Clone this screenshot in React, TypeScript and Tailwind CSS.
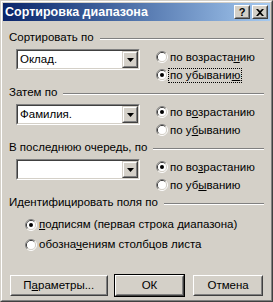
import type { ReactNode } from 'react';

const font = { fontFamily: '"Liberation Sans", Arial, sans-serif' };

function Radio({ checked }: { checked?: boolean }) {
  return (
    <svg width="12" height="12" viewBox="0 0 12 12" className="shrink-0">
      <path d="M2.11 9.89A5.5 5.5 0 0 1 9.89 2.11" fill="none" stroke="#808080" />
      <path d="M9.89 2.11A5.5 5.5 0 0 1 2.11 9.89" fill="none" stroke="#ffffff" />
      <path d="M2.82 9.18A4.5 4.5 0 0 1 9.18 2.82" fill="none" stroke="#404040" />
      <path d="M9.18 2.82A4.5 4.5 0 0 1 2.82 9.18" fill="none" stroke="#d4d0c8" />
      <circle cx="6" cy="6" r="4" fill="#ffffff" />
      {checked && <circle cx="6" cy="6" r="2" fill="#000000" />}
    </svg>
  );
}

function RadioRow({ checked, focus, children }: { checked?: boolean; focus?: boolean; children: ReactNode }) {
  return (
    <div className="flex items-center h-[18px]">
      <Radio checked={checked} />
      <span
        className={
          'px-[1px] leading-[13px] whitespace-nowrap border border-dotted ' +
          (focus ? 'border-black' : 'border-transparent')
        }
      >
        {children}
      </span>
    </div>
  );
}

function Combo({ value }: { value: string }) {
  return (
    <div className="w-[124px] h-[21px] border border-t-[#808080] border-l-[#808080] border-b-white border-r-white">
      <div className="h-full flex border border-t-[#404040] border-l-[#404040] border-b-[#d4d0c8] border-r-[#d4d0c8] bg-white">
        <span className="flex-1 pl-[2px] leading-[17px]">{value}</span>
        <div className="w-[16px] h-full border border-t-[#d4d0c8] border-l-[#d4d0c8] border-b-[#404040] border-r-[#404040]">
          <div className="h-full flex items-center justify-center bg-[#d4d0c8] border border-t-white border-l-white border-b-[#808080] border-r-[#808080]">
            <svg width="7" height="4" viewBox="0 0 7 4">
              <path d="M0 0h7L3.5 4z" fill="#000" />
            </svg>
          </div>
        </div>
      </div>
    </div>
  );
}

function Header({ children }: { children: ReactNode }) {
  return (
    <div className="flex items-center h-[13px]">
      <span className="leading-[13px] whitespace-nowrap">{children}</span>
      <div className="flex-1 ml-[6px] mt-[3px] border-t border-t-[#808080] border-b border-b-white" />
    </div>
  );
}

function SortGroup({
  title,
  value,
  asc,
  desc,
  descChecked,
}: {
  title: string;
  value: string;
  asc: ReactNode;
  desc: ReactNode;
  descChecked?: boolean;
}) {
  return (
    <div className="h-[55px] flex flex-col">
      <Header>{title}</Header>
      <div className="flex mt-[4px]">
        <div className="ml-[7px] mt-[1px] shrink-0">
          <Combo value={value} />
        </div>
        <div className="ml-[16px] flex flex-col shrink-0">
          <RadioRow checked={!descChecked}>{asc}</RadioRow>
          <RadioRow checked={descChecked} focus={descChecked}>
            {desc}
          </RadioRow>
        </div>
      </div>
    </div>
  );
}

function Button({ children, primary, w }: { children: ReactNode; primary?: boolean; w: string }) {
  return (
    <div className={(primary ? 'border border-black ' : 'border border-transparent ') + w + ' h-[23px]'}>
      <div className="h-full border border-t-white border-l-white border-b-[#404040] border-r-[#404040]">
        <div className="h-full flex items-center justify-center bg-[#d4d0c8] border border-t-[#d4d0c8] border-l-[#d4d0c8] border-b-[#808080] border-r-[#808080]">
          {children}
        </div>
      </div>
    </div>
  );
}

function TitleButton({ children }: { children: ReactNode }) {
  return (
    <div className="w-[16px] h-[14px] border border-t-white border-l-white border-b-[#404040] border-r-[#404040]">
      <div className="h-full flex items-center justify-center bg-[#d4d0c8] border border-t-[#d4d0c8] border-l-[#d4d0c8] border-b-[#808080] border-r-[#808080]">
        {children}
      </div>
    </div>
  );
}

export default function App() {
  return (
    <div className="w-[273px] h-[302px] text-[11.5px] text-black" style={font}>
      <div className="h-full border border-t-[#d4d0c8] border-l-[#d4d0c8] border-b-[#404040] border-r-[#404040]">
        <div className="h-full border border-t-white border-l-white border-b-[#808080] border-r-[#808080] bg-[#d4d0c8] p-[1px] flex flex-col">
          {/* title bar */}
          <div className="h-[18px] flex items-center pl-[2px] pr-[2px] bg-gradient-to-r from-[#0a246a] to-[#a6caf0]">
            <span className="flex-1 text-white font-bold text-[12.5px] leading-[18px]">
              Сортировка диапазона
            </span>
            <TitleButton>
              <span className="font-bold text-[11px] leading-[10px]">?</span>
            </TitleButton>
            <div className="w-[2px]" />
            <TitleButton>
              <svg width="8" height="7" viewBox="0 0 8 7">
                <path d="M0 0h2l2 2 2-2h2L5 3.5 8 7H6L4 5 2 7H0l3-3.5z" fill="#000" />
              </svg>
            </TitleButton>
          </div>

          <div className="flex flex-col pl-[6px] pr-[6px] pt-[10px]">
            <SortGroup
              title="Сортировать по"
              value="Оклад."
              asc={<>по возраста<u>н</u>ию</>}
              desc={<>по убывани<u>ю</u></>}
              descChecked
            />
            <SortGroup
              title="Затем по"
              value="Фамилия."
              asc={<>по в<u>о</u>зрастанию</>}
              desc={<>по у<u>б</u>ыванию</>}
            />
            <SortGroup
              title="В последнюю очередь, по"
              value=""
              asc={<>по во<u>з</u>растанию</>}
              desc={<>по уб<u>ы</u>ванию</>}
            />
            <div className="flex flex-col">
              <Header>Идентифицировать поля по</Header>
              <div className="flex flex-col ml-[16px] mt-[6px]">
                <div className="h-[20px] flex items-center">
                  <Radio checked />
                  <span className="ml-[2px] whitespace-nowrap">
                    <u>п</u>одписям (первая строка диапазона)
                  </span>
                </div>
                <div className="h-[20px] flex items-center">
                  <Radio />
                  <span className="ml-[2px] whitespace-nowrap">
                    обозна<u>ч</u>ениям столбцов листа
                  </span>
                </div>
              </div>
            </div>
            <div className="flex mt-[19px]">
              <Button w="w-[100px]">
                <span>
                  П<u>а</u>раметры...
                </span>
              </Button>
              <div className="w-[5px]" />
              <Button primary w="w-[72px]">
                <span>ОК</span>
              </Button>
              <div className="w-[7px]" />
              <Button w="w-[72px]">
                <span>Отмена</span>
              </Button>
            </div>
          </div>
        </div>
      </div>
    </div>
  );
}
